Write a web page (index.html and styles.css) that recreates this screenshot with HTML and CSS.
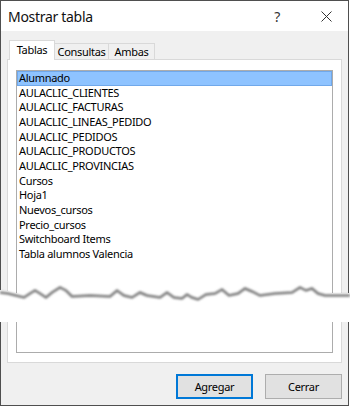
FILE: index.html
```html
<!DOCTYPE html>
<html lang="es">
<head>
    <meta charset="UTF-8">
    <title>Mostrar tabla</title>
    <link rel="stylesheet" href="styles.css">
</head>
<body>
    <div class="window">
        <div class="titlebar">
            <span class="title">Mostrar tabla</span>
            <span class="help">?</span>
            <svg class="close" width="11" height="11" viewBox="0 0 11 11">
                <path d="M0.5 0.5 L10.5 10.5 M10.5 0.5 L0.5 10.5" stroke="#333" stroke-width="1" fill="none"/>
            </svg>
        </div>

        <div class="content">
            <div class="tabs">
                <div class="tab active">Tablas</div>
                <div class="tab">Consultas</div>
                <div class="tab">Ambas</div>
            </div>
            <div class="panel">
                <ul class="list">
                    <li class="selected">Alumnado</li>
                    <li>AULACLIC_CLIENTES</li>
                    <li>AULACLIC_FACTURAS</li>
                    <li>AULACLIC_LINEAS_PEDIDO</li>
                    <li>AULACLIC_PEDIDOS</li>
                    <li>AULACLIC_PRODUCTOS</li>
                    <li>AULACLIC_PROVINCIAS</li>
                    <li>Cursos</li>
                    <li>Hoja1</li>
                    <li>Nuevos_cursos</li>
                    <li>Precio_cursos</li>
                    <li>Switchboard Items</li>
                    <li>Tabla alumnos Valencia</li>
                </ul>
            </div>
            <div class="buttons">
                <button class="btn default">Agregar</button>
                <button class="btn">Cerrar</button>
            </div>
        </div>

        <!-- torn paper cut over the empty part of the list -->
        <svg class="torn" width="350" height="45" viewBox="0 0 350 45">
            <defs>
                <filter id="blur" x="-5%" y="-50%" width="110%" height="200%">
                    <feGaussianBlur stdDeviation="1.3"/>
                </filter>
            </defs>
            <path fill="#fff" d="M0 10 L8 11 L16 13 L24 15 L30 11 L35 8 L40 11 L46 15 L52 10 L60 5 L66 8 L72 14 L90 13 L110 14 L117 8 L124 13 L132 15 L140 10 L147 13 L160 15 L167 10 L174 15 L182 16 L187 12 L192 15 L198 17 L206 12 L215 11 L222 7 L229 13 L238 11 L245 6 L252 9 L260 13 L275 11 L292 10 L300 5 L306 8 L312 6 L318 11 L325 13 L350 13 L350 42 L0 42 Z"/>
            <path fill="none" stroke="#7a7a7a" stroke-width="2.5" filter="url(#blur)" transform="translate(0 2.5)" d="M0 10 L8 11 L16 13 L24 15 L30 11 L35 8 L40 11 L46 15 L52 10 L60 5 L66 8 L72 14 L90 13 L110 14 L117 8 L124 13 L132 15 L140 10 L147 13 L160 15 L167 10 L174 15 L182 16 L187 12 L192 15 L198 17 L206 12 L215 11 L222 7 L229 13 L238 11 L245 6 L252 9 L260 13 L275 11 L292 10 L300 5 L306 8 L312 6 L318 11 L325 13 L350 13"/>
        </svg>
    </div>
</body>
</html>
```

FILE: styles.css
```css
* {
    margin: 0;
    padding: 0;
    box-sizing: border-box;
}

body {
    background: #fff;
    font-family: 'Noto Sans', sans-serif;
    font-size: 11px;
    letter-spacing: -0.3px;
    color: #000;
}

.window {
    position: relative;
    width: 349px;
    height: 406px;
    border: 1px solid #4f4f4f;
    background: #f0f0f0;
    display: flex;
    flex-direction: column;
}

.titlebar {
    height: 30px;
    background: #fff;
    display: flex;
    align-items: center;
    padding-left: 7px;
}

.title {
    font-size: 14px;
    flex: 1;
    color: #111;
}

.help {
    font-size: 14px;
    color: #333;
    margin-right: 41px;
}

.close {
    margin-right: 16px;
}

.content {
    padding: 9px 6px 0 6px;
}

.tabs {
    display: flex;
    align-items: flex-end;
    height: 19px;
    padding-left: 2px;
    position: relative;
    z-index: 1;
}

.tab {
    height: 16px;
    border: 1px solid #d9d9d9;
    border-bottom: none;
    border-left: none;
    background: #f0f0f0;
    text-align: center;
    line-height: 15px;
    white-space: nowrap;
}

.tab:nth-child(2) {
    width: 54px;
}

.tab:nth-child(3) {
    width: 46px;
}

.tab.active {
    width: 46px;
    height: 20px;
    border-left: 1px solid #d9d9d9;
    background: #fff;
    line-height: 18px;
    margin-bottom: -1px;
}

.panel {
    height: 304px;
    background: #fff;
    border: 1px solid #d9d9d9;
    padding: 10px 8px 9px 8px;
}

.list {
    list-style: none;
    height: 100%;
    border: 1px solid #acacac;
    line-height: 14.67px;
}

.list li {
    padding-left: 2px;
    height: 14.67px;
    white-space: nowrap;
}

.list li.selected {
    background: #8ec3ff;
    border: 1px solid #70a8ea;
    padding-left: 1px;
    line-height: 12.67px;
}

.buttons {
    display: flex;
    justify-content: flex-end;
    gap: 12px;
    margin-top: 11px;
}

.btn {
    width: 77px;
    height: 25px;
    background: #e1e1e1;
    border: 1px solid #adadad;
    font-family: 'Noto Sans', sans-serif;
    font-size: 11px;
    letter-spacing: -0.3px;
    color: #000;
}

.btn.default {
    border: 2px solid #0078d7;
}

.torn {
    position: absolute;
    left: -1px;
    top: 279px;
}
```
